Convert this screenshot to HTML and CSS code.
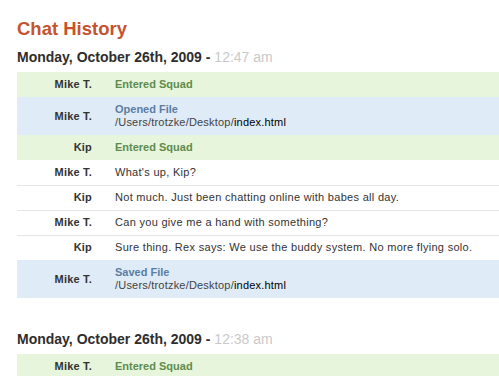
FILE: index.html
```html
<!DOCTYPE html>
<html lang="en">
<head>
  <meta charset="UTF-8">
  <title>Chat History</title>
  <link rel="stylesheet" href="styles.css">
</head>
<body>
  <div class="page">
    <h1 class="title">Chat History</h1>

    <div class="day">
      <h2 class="day-head">Monday, October 26th, 2009 - <span class="time">12:47 am</span></h2>
      <div class="log">
        <div class="row joined">
          <div class="who">Mike T.</div>
          <div class="what">Entered Squad</div>
        </div>
        <div class="row file">
          <div class="who">Mike T.</div>
          <div class="what">Opened File<span class="path">/Users/trotzke/Desktop/<b>index.html</b></span></div>
        </div>
        <div class="row joined">
          <div class="who">Kip</div>
          <div class="what">Entered Squad</div>
        </div>
        <div class="row msg">
          <div class="who">Mike T.</div>
          <div class="what">What's up, Kip?</div>
        </div>
        <div class="row msg">
          <div class="who">Kip</div>
          <div class="what">Not much. Just been chatting online with babes all day.</div>
        </div>
        <div class="row msg">
          <div class="who">Mike T.</div>
          <div class="what">Can you give me a hand with something?</div>
        </div>
        <div class="row msg">
          <div class="who">Kip</div>
          <div class="what">Sure thing. Rex says: We use the buddy system. No more flying solo.</div>
        </div>
        <div class="row file">
          <div class="who">Mike T.</div>
          <div class="what">Saved File<span class="path">/Users/trotzke/Desktop/<b>index.html</b></span></div>
        </div>
      </div>
    </div>

    <div class="day">
      <h2 class="day-head">Monday, October 26th, 2009 - <span class="time">12:38 am</span></h2>
      <div class="log">
        <div class="row joined">
          <div class="who">Mike T.</div>
          <div class="what">Entered Squad</div>
        </div>
      </div>
    </div>
  </div>
</body>
</html>
```

FILE: styles.css
```css
html, body{
  margin : 0;
  background : #fff;
  font-family : "Liberation Sans", Arial, Helvetica, sans-serif;
  color : #333;
}
.page{
  padding : 18px 0 0 17px;
}
.title{
  margin : 0;
  font-size : 18.5px;
  line-height : 22px;
  font-weight : bold;
  color : #c4532f;
}

/* one block per day */
.day{
  margin-bottom : 32px;
}
.day-head{
  margin : 8px 0 6px;
  font-size : 14px;
  line-height : 18px;
  font-weight : bold;
  color : #2e2e2e;
}
.day-head .time{
  font-weight : normal;
  color : #c9c9c9;
}

.log{
  font-size : 11px;
  line-height : 13px;
}
.row{
  display : grid;
  grid-template-columns : 75px 1fr;
  column-gap : 23px;
  padding : 6px 0;
}
.who{
  text-align : right;
  font-weight : bold;
  color : #333;
  align-self : center;
  letter-spacing : 0.2px;
}
.what{
  color : #333;
  letter-spacing : 0.3px;
}

/* kinds of rows */
.joined{
  background : #e6f5db;
}
.joined .what{
  font-weight : bold;
  color : #5e8b4e;
  letter-spacing : 0;
}
.file{
  background : #dfebf7;
}
.file .what{
  font-weight : bold;
  color : #5a7ea2;
  letter-spacing : 0;
}
.file .path{
  display : block;
  font-weight : normal;
  color : #444;
  letter-spacing : 0.2px;
}
.file .path b{
  font-weight : normal;
  color : #000;
}
.msg + .msg{
  border-top : 1px solid #e6e6e6;
  padding-top : 5px;
}
```
